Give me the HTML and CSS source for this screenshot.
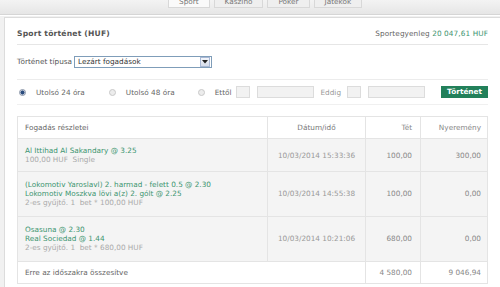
FILE: index.html
```html
<!DOCTYPE html>
<html lang="hu">
<head>
<meta charset="utf-8">
<title>Sport történet</title>
<link rel="stylesheet" href="styles.css">
</head>
<body>
<div class="topbar">
  <div class="tabs">
    <span class="tab active">Sport</span>
    <span class="tab">Kaszinó</span>
    <span class="tab">Póker</span>
    <span class="tab">Játékok</span>
  </div>
</div>
<div class="page">
  <div class="panel">
    <div class="head">
      <span class="title">Sport történet (HUF)</span>
      <span class="balance">Sportegyenleg <span class="green">20 047,61 HUF</span></span>
    </div>
    <div class="typerow">
      <span class="lbl">Történet típusa</span>
      <div class="select">
        <span class="seltext">Lezárt fogadások</span>
        <span class="selbtn"><svg width="6" height="4" viewBox="0 0 6 4"><path d="M0 0h6L3 3.5z" fill="#222"/></svg></span>
      </div>
    </div>
    <div class="filterrow">
      <span class="radio on"></span><span class="rlbl">Utolsó 24 óra</span>
      <span class="radio r2"></span><span class="rlbl">Utolsó 48 óra</span>
      <span class="radio r3"></span><span class="rlbl">Ettől</span>
      <span class="box small b1"></span><span class="box big"></span>
      <span class="rlbl eddig">Eddig</span>
      <span class="box small"></span><span class="box big"></span>
      <span class="btn">Történet</span>
    </div>
    <table class="bets">
      <thead>
        <tr><th class="c1">Fogadás részletei</th><th class="c2">Dátum/idő</th><th class="c3">Tét</th><th class="c4">Nyeremény</th></tr>
      </thead>
      <tbody>
        <tr class="r1">
          <td class="c1"><div class="g">Al Ittihad Al Sakandary @ 3.25</div><div class="sub">100,00 HUF &nbsp;Single</div></td>
          <td class="c2">10/03/2014 15:33:36</td><td class="c3">100,00</td><td class="c4">300,00</td>
        </tr>
        <tr>
          <td class="c1"><div class="g">(Lokomotiv Yaroslavl) 2. harmad - felett 0.5 @ 2.30</div><div class="g">Lokomotiv Moszkva lövi a(z) 2. gólt @ 2.25</div><div class="sub">2-es gyűjtő. 1 &nbsp;bet * 100,00 HUF</div></td>
          <td class="c2">10/03/2014 14:55:38</td><td class="c3">100,00</td><td class="c4">0,00</td>
        </tr>
        <tr>
          <td class="c1"><div class="g">Osasuna @ 2.30</div><div class="g">Real Sociedad @ 1.44</div><div class="sub">2-es gyűjtő. 1 &nbsp;bet * 680,00 HUF</div></td>
          <td class="c2">10/03/2014 10:21:06</td><td class="c3">680,00</td><td class="c4">0,00</td>
        </tr>
      </tbody>
      <tfoot>
        <tr><td class="c1" colspan="2">Erre az időszakra összesítve</td><td class="c3">4 580,00</td><td class="c4">9 046,94</td></tr>
      </tfoot>
    </table>
  </div>
</div>
</body>
</html>
```

FILE: styles.css
```css
* { box-sizing: border-box; }
html, body { margin: 0; padding: 0; }
body {
  width: 500px;
  height: 287px;
  overflow: hidden;
  background: #f1f1f1;
  font-family: "DejaVu Sans", Verdana, sans-serif;
  font-size: 7.3px;
  color: #555;
}
.topbar {
  height: 15px;
  background: linear-gradient(#f3f3f3, #e6e6e6);
  border-bottom: 1px solid #d6d6d6;
  box-shadow: 0 1px 0 #fff;
  overflow: hidden;
}
.tabs {
  display: flex;
  margin-left: 168px;
  height: 11px;
}
.tab {
  padding: 0 10px;
  line-height: 4px;
  height: 8px;
  color: #777;
  border: 1px solid #d8d8d8;
  border-top: 0;
  margin-right: 4px;
  background: #efefef;
}
.tab.active { background: #fafafa; }
.page { padding: 2px 0 0 4px; }
.panel {
  background: #fff;
  border-left: 1px solid #dcdcdc;
  border-top: 1px solid #dcdcdc;
  padding: 0 12px 0 12px;
  height: 300px;
}
.head {
  height: 27px;
  display: flex;
  justify-content: space-between;
  align-items: flex-end;
  padding-bottom: 6px;
  border-bottom: 1px solid #e6e6e6;
}
.title { font-weight: bold; color: #555; font-size: 7.6px; letter-spacing: 0.2px; }
.balance { color: #666; letter-spacing: 0.1px; }
.green { color: #3c9470; }
.typerow {
  height: 35px;
  display: flex;
  align-items: center;
  border-bottom: 1px solid #ececec;
  padding-bottom: 1px;
}
.lbl { color: #555; margin-right: 2px; }
.select {
  width: 138px;
  height: 12px;
  border: 1px solid #7f9db9;
  display: flex;
  align-items: center;
  justify-content: space-between;
  padding-left: 3px;
  color: #333;
}
.selbtn {
  width: 10px;
  height: 10px;
  margin-right: 1px;
  background: linear-gradient(#f4f6fb, #d5dcea);
  border: 1px solid #a9b8d4;
  display: flex;
  align-items: center;
  justify-content: center;
}
.filterrow {
  height: 25px;
  display: flex;
  align-items: center;
  border-bottom: 1px solid #f0f0f0;
  padding-left: 2px;
}
.radio {
  width: 7px;
  height: 7px;
  border-radius: 50%;
  border: 1px solid #c9c9c9;
  background: #ececec;
  margin-right: 10px;
}
.radio.on {
  border-color: #8a95a8;
  background: radial-gradient(circle, #2b4c7e 0 1.8px, #c8d0de 2.2px);
}
.r2 { margin-left: 24px; }
.r3 { margin-left: 23px; }
.rlbl { color: #666; }
.box {
  height: 12px;
  background: #f2f2f2;
  border: 1px solid #dcdcdc;
}
.box.small { width: 14px; margin-right: 7px; }
.box.b1 { margin-left: 5px; }
.box.big { width: 57px; }
.eddig { margin: 0 6px 0 6px; color: #999; }
.btn {
  margin-left: auto;
  width: 47px;
  height: 12px;
  background: #22805a;
  color: #fff;
  font-weight: bold;
  text-align: center;
  line-height: 12px;
  font-size: 7.3px;
}
.bets {
  margin-top: 11px;
  width: 471px;
  border-collapse: collapse;
  border: 1px solid #e2e2e2;
}
.bets th, .bets td {
  border: 1px solid #e4e4e4;
  font-weight: normal;
  line-height: 9px;
  padding: 0 6px;
}
.bets thead tr { height: 22px; }
.bets th { color: #666; background: #fff; }
.bets th.c1, .bets td.c1 { text-align: left; width: 250px; padding-left: 7px; }
.bets .c2 { width: 98px; text-align: center; color: #999; }
.bets th.c2 { color: #777; }
.bets .c3 { width: 55px; text-align: right; padding-right: 8px; color: #888; }
.bets .c4 { text-align: right; padding-right: 6px; color: #888; }
.bets tbody td { background: #f4f4f4; padding-top: 8px; padding-bottom: 9px; }
.bets tbody tr.r1 td { padding-top: 7px; padding-bottom: 7px; }
.g { color: #3c9470; }
.sub { color: #aaa; }
.bets tfoot tr { height: 22px; }
.bets tfoot td { background: #fff; color: #666; }
.bets tfoot td.c3, .bets tfoot td.c4 { color: #888; }
```
